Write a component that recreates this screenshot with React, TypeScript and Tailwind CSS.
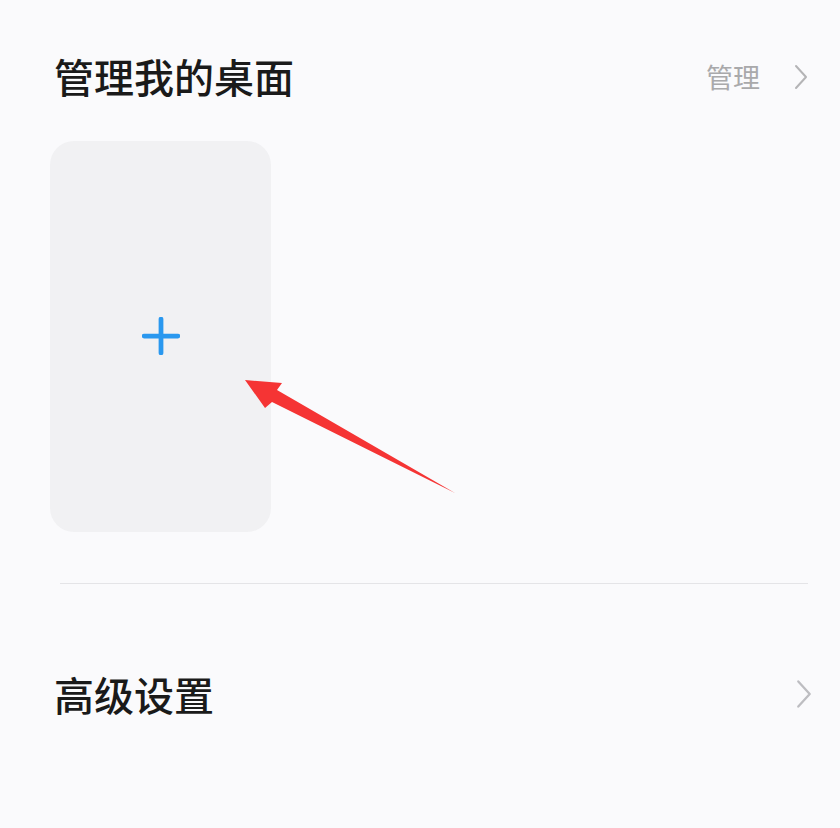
import React from "react";

function Chevron({ className }: { className?: string }) {
  return (
    <svg viewBox="0 0 14 26" className={className} fill="none">
      <path d="M2 2 L12 13 L2 24" stroke="currentColor" strokeWidth="2" strokeLinecap="round" strokeLinejoin="round" />
    </svg>
  );
}

export default function App() {
  return (
    <div
      className="relative w-[840px] h-[828px] overflow-hidden bg-[#fafafc] text-[#1a1a1a]"
      style={{ fontFamily: '"Noto Sans CJK SC", "Noto Sans", sans-serif' }}
    >
      {/* header */}
      <div className="flex items-center justify-between pl-[54px] pr-[32px] pt-[52px] h-[100px]">
        <h1 className="text-[40px] leading-[48px] font-medium">管理我的桌面</h1>
        <div className="flex items-center gap-[34px] text-[#a9a9ab] mt-[2px]">
          <span className="text-[27px] leading-[40px]">管理</span>
          <Chevron className="w-[14px] h-[26px] text-[#b4b4b6]" />
        </div>
      </div>

      {/* add desktop card */}
      <div className="pl-[50px] pt-[41px]">
        <div className="w-[221px] h-[391px] rounded-[24px] bg-[#f1f1f3] flex items-center justify-center">
          <svg viewBox="0 0 36 36" className="w-[38px] h-[38px] mb-[2px]">
            <path d="M18 2 V34 M2 18 H34" stroke="#2a98ef" strokeWidth="4.5" strokeLinecap="round" />
          </svg>
        </div>
      </div>

      {/* divider */}
      <div className="ml-[60px] mr-[32px] mt-[51px] h-px bg-[#e4e4e7]" />

      {/* advanced settings */}
      <div className="flex items-center justify-between pl-[54px] pr-[28px] mt-[86px] h-[48px]">
        <span className="text-[40px] leading-[48px] font-medium">高级设置</span>
        <Chevron className="w-[16px] h-[30px] text-[#bdbdc1]" />
      </div>

      {/* red annotation arrow */}
      <svg className="absolute left-0 top-0 pointer-events-none" width="840" height="828">
        <polygon
          points="245,380 282,383 277,390 455,493 272,402 265,408"
          fill="#f53434"
        />
      </svg>
    </div>
  );
}
